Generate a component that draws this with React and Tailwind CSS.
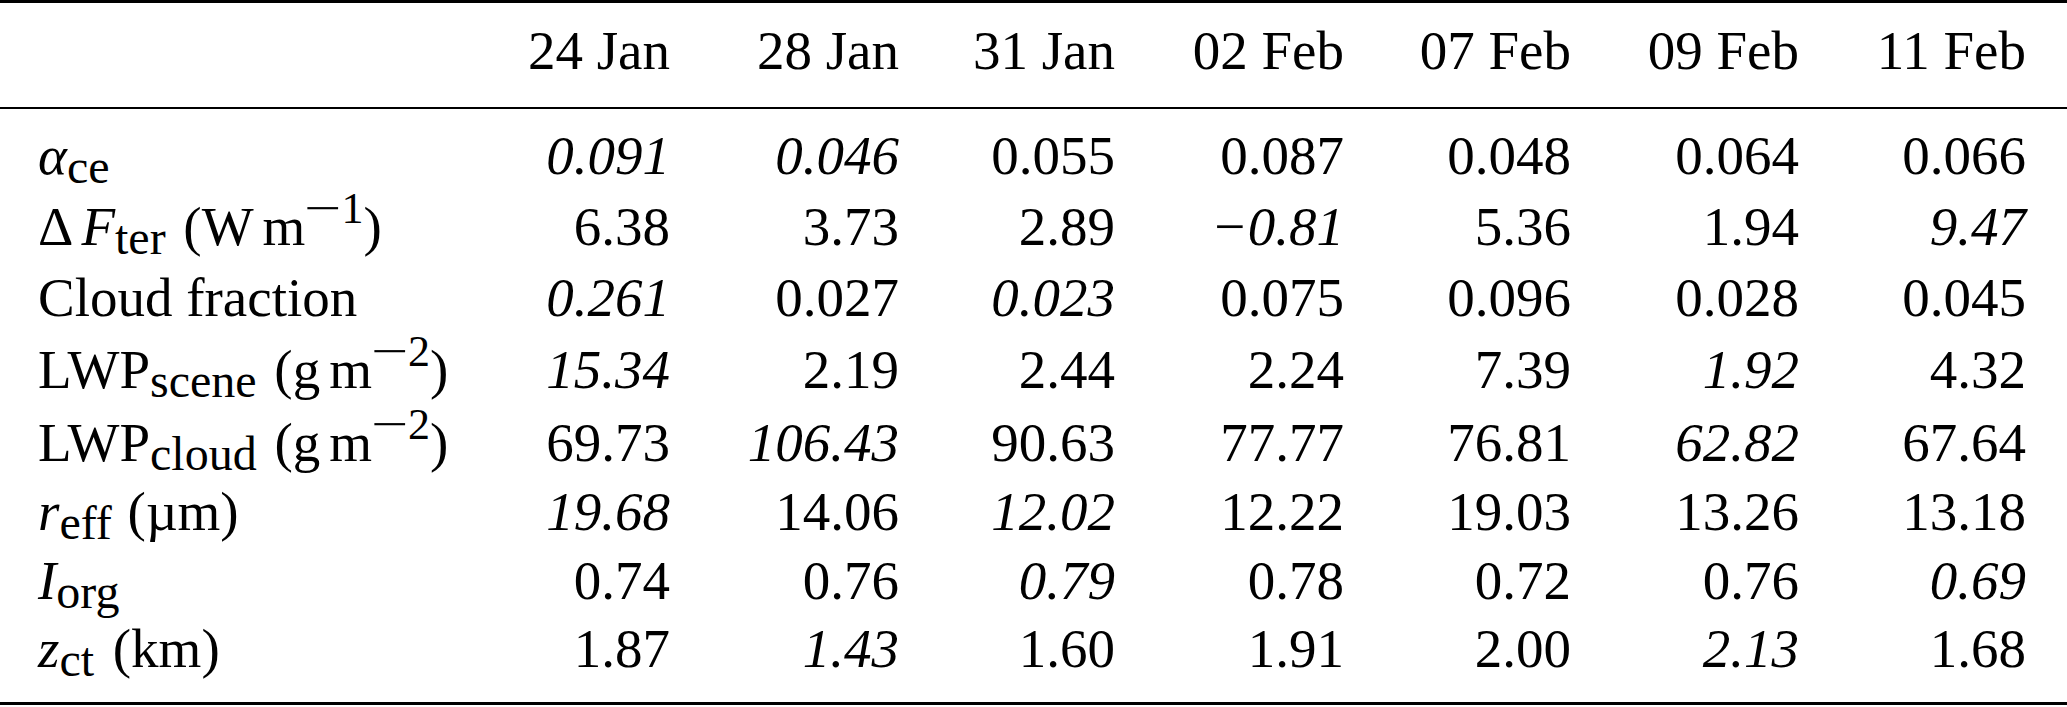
const COLS = ['24 Jan', '28 Jan', '31 Jan', '02 Feb', '07 Feb', '09 Feb', '11 Feb']

const Sub = ({ children, gap = 'mr-[4px]' }) => (
  <span className={`align-[-9px] text-[48px] leading-[0] ${gap}`}>{children}</span>
)

const Sup = ({ exp }) => (
  <span className="align-[22px] text-[44px] leading-[0]">
    <span className="inline-block w-[36px] text-center scale-x-150">−</span>
    {exp}
  </span>
)

const Unit = ({ base, exp }) => (
  <>
    {' ('}
    {base}
    <span className="ml-[9px]">m</span>
    <Sup exp={exp} />)
  </>
)

// [value, italic]
const ROWS = [
  {
    h: 'h-[71px]',
    label: <><span className="italic">α</span><Sub>ce</Sub></>,
    values: [['0.091', 1], ['0.046', 1], ['0.055'], ['0.087'], ['0.048'], ['0.064'], ['0.066']],
  },
  {
    h: 'h-[71px]',
    label: <>Δ<span className="italic ml-[8px]">F</span><Sub>ter</Sub><Unit base="W" exp="1" /></>,
    values: [['6.38'], ['3.73'], ['2.89'], ['−0.81', 1], ['5.36'], ['1.94'], ['9.47', 1]],
  },
  {
    h: 'h-[72px]',
    label: <>Cloud fraction</>,
    values: [['0.261', 1], ['0.027'], ['0.023', 1], ['0.075'], ['0.096'], ['0.028'], ['0.045']],
  },
  {
    h: 'h-[73px]',
    label: <>LWP<Sub>scene</Sub><Unit base="g" exp="2" /></>,
    values: [['15.34', 1], ['2.19'], ['2.44'], ['2.24'], ['7.39'], ['1.92', 1], ['4.32']],
  },
  {
    h: 'h-[69px]',
    label: <>LWP<Sub>cloud</Sub><Unit base="g" exp="2" /></>,
    values: [['69.73'], ['106.43', 1], ['90.63'], ['77.77'], ['76.81'], ['62.82', 1], ['67.64']],
  },
  {
    h: 'h-[69px]',
    label: <><span className="italic">r</span><Sub gap="mr-[2px]">eff</Sub> (µm)</>,
    values: [['19.68', 1], ['14.06'], ['12.02', 1], ['12.22'], ['19.03'], ['13.26'], ['13.18']],
  },
  {
    h: 'h-[68px]',
    label: <><span className="italic">I</span><Sub>org</Sub></>,
    values: [['0.74'], ['0.76'], ['0.79', 1], ['0.78'], ['0.72'], ['0.76'], ['0.69', 1]],
  },
  {
    h: 'h-[88px]',
    label: <><span className="italic">z</span><Sub gap="mr-[5px]">ct</Sub> (km)</>,
    values: [['1.87'], ['1.43', 1], ['1.60'], ['1.91'], ['2.00'], ['2.13', 1], ['1.68']],
  },
]

const GRID = 'grid grid-cols-[488px_220px_229px_216px_229px_227px_228px_230px] items-start'

function App() {
  return (
    <div className="w-[2067px] h-[707px] bg-white text-black font-[family-name:'Liberation_Serif','Times_New_Roman',serif] text-[55px] leading-[70px]">
      <div className="border-t-[3px] border-b-[3px] border-black">

        {/* Header */}
        <div className={`${GRID} h-[106px] pt-[13px] border-b-2 border-black`}>
          <div />
          {COLS.map((c, i) => (
            <div key={c} className={`text-right whitespace-nowrap ${i === 6 ? 'pr-[41px]' : 'pr-[38px]'}`}>
              {c}
            </div>
          ))}
        </div>

        {/* Body */}
        <div className="pt-[12px]">
          {ROWS.map((row, r) => (
            <div key={r} className={`${GRID} ${row.h}`}>
              <div className="pl-[38px] whitespace-nowrap">{row.label}</div>
              {row.values.map(([v, it], i) => (
                <div
                  key={i}
                  className={`text-right whitespace-nowrap ${it ? 'italic' : ''} ${i === 6 ? 'pr-[41px]' : 'pr-[38px]'}`}
                >
                  {v}
                </div>
              ))}
            </div>
          ))}
        </div>

      </div>
    </div>
  )
}

export default App
